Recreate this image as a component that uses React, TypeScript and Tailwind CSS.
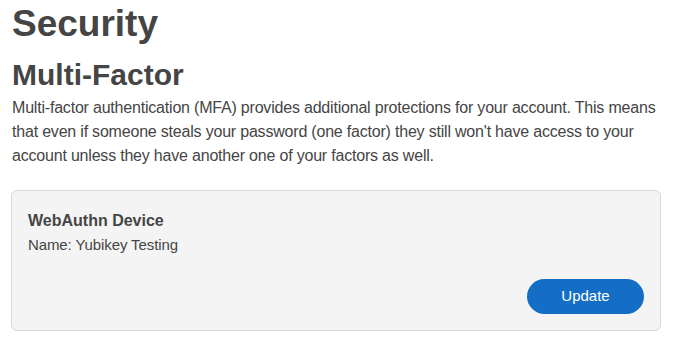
export default function App() {
  return (
    <div className="px-3 font-['Liberation_Sans',Arial,sans-serif] text-[#454545]">
      <h1 className="text-[37px] font-bold leading-[48px]">Security</h1>
      <h2 className="mt-[9px] text-[30px] font-bold leading-[36px]">Multi-Factor</h2>
      <p className="mt-[3px] max-w-[660px] text-base leading-6 tracking-[-0.2px]">
        Multi-factor authentication (MFA) provides additional protections for your account. This means
        <br />
        that even if someone steals your password (one factor) they still won't have access to your
        <br />
        account unless they have another one of your factors as well.
      </p>
      <div className="mt-[22px] flex w-[650px] -ml-px flex-col rounded-md border border-[#d9d9d9] bg-[#f4f4f4] px-4 pt-[18px] pb-4">
        <div className="text-[16px] font-bold leading-6">WebAuthn Device</div>
        <div className="text-[15px] leading-6 tracking-[-0.1px]">Name: Yubikey Testing</div>
        <button className="mt-[22px] h-[35px] w-[117px] self-end rounded-full bg-[#156ec5] text-[15px] text-white">
          Update
        </button>
      </div>
    </div>
  );
}
